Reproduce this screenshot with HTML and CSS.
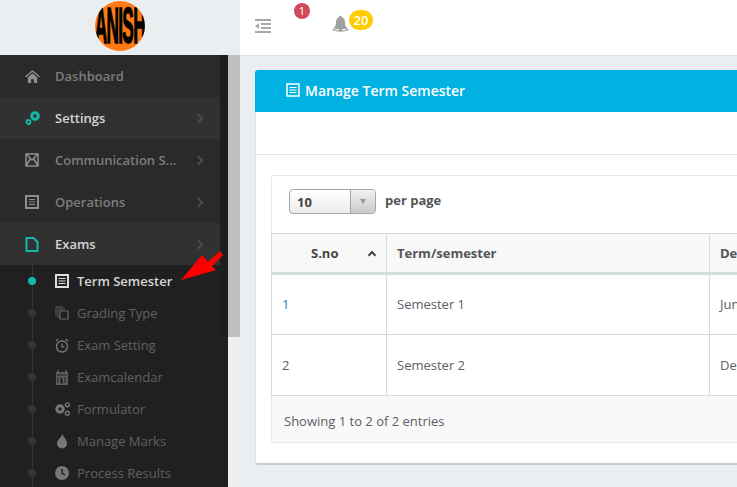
FILE: index.html
```html
<!DOCTYPE html>
<html lang="en">
<head>
    <meta charset="UTF-8">
    <meta name="viewport" content="width=device-width, initial-scale=1.0">
    <title>Manage Term Semester</title>
    <link rel="stylesheet" href="styles.css">
</head>
<body>

    <!-- Top bar -->
    <div class="topbar">
        <div class="brand">
            <div class="logo"><span class="logo-text">ANISH</span></div>
        </div>
        <div class="toolbar">
            <svg class="toggle-icon" width="16" height="16" viewBox="0 0 16 16">
                <path d="M0 1h16v2H0zM6 5h10v2H6zM6 9h10v2H6zM0 13h16v2H0zM4 5v6L0 8z" fill="#a8a8a8"/>
            </svg>
            <span class="badge badge-red">1</span>
            <svg class="bell-icon" width="17" height="18" viewBox="0 0 17 18">
                <path d="M8.500 1c1 0 1.500.6 1.500 1.300C12.300 3 13 5 13 7.500c0 3 1 4.500 2.500 5.500h-14C3 12 4 10.500 4 7.500 4 5 4.700 3 7 2.300 7 1.600 7.500 1 8.500 1z" fill="#a0a0a0"/>
                <path d="M1 14.500c2-1.500 13-1.500 15 0-1 2-14 2-15 0z" fill="none" stroke="#a0a0a0" stroke-width="1.200"/>
                <circle cx="8.500" cy="15" r="1.800" fill="#a0a0a0"/>
            </svg>
            <span class="badge badge-yellow">20</span>
        </div>
    </div>

    <div class="layout">

        <!-- Sidebar -->
        <div class="sidebar">
            <div class="nav">
                <div class="nav-item">
                    <svg class="nav-icon" width="15" height="13" viewBox="0 0 16 14"><path d="M8 0l8 7-1 1-7-6-7 6-1-1zM3 8l5-4.500L13 8v6H9.500v-4h-3v4H3z" fill="#8f8f8f"/></svg>
                    <span>Dashboard</span>
                </div>
                <div class="nav-item nav-light nav-on">
                    <svg class="nav-icon" width="16" height="16" viewBox="0 0 16 16"><circle cx="10" cy="6" r="3.300" fill="none" stroke="#14b8a6" stroke-width="3"/><circle cx="3.500" cy="12" r="2" fill="none" stroke="#14b8a6" stroke-width="1.800"/></svg>
                    <span>Settings</span>
                    <i class="chevron"></i>
                </div>
                <div class="nav-item">
                    <svg class="nav-icon" width="14" height="14" viewBox="0 0 14 14"><path d="M1 1h12v12H1zM1 1l6 6 6-6M1 13l4.500-7.500M13 13L8.500 5.500" fill="none" stroke="#8f8f8f" stroke-width="1.500"/></svg>
                    <span>Communication S...</span>
                    <i class="chevron"></i>
                </div>
                <div class="nav-item">
                    <svg class="nav-icon" width="14" height="14" viewBox="0 0 14 14"><path d="M1 1h12v12H1z" fill="none" stroke="#8f8f8f" stroke-width="2"/><path d="M4 4.500h6M4 7h6M4 9.500h6" stroke="#8f8f8f"/></svg>
                    <span>Operations</span>
                    <i class="chevron"></i>
                </div>
                <div class="nav-item nav-light nav-on">
                    <svg class="nav-icon" width="14" height="15" viewBox="0 0 14 15"><path d="M1.500 1h7l4 4v9h-11z" fill="none" stroke="#14b8a6" stroke-width="2"/></svg>
                    <span>Exams</span>
                    <i class="chevron"></i>
                </div>

                <div class="subnav">
                    <div class="sub-item sub-on">
                        <svg class="sub-icon" width="14" height="14" viewBox="0 0 14 14"><path d="M1 1h12v12H1z" fill="#222" stroke="#ddd" stroke-width="2"/><path d="M3.500 4.500h7M3.500 7h7M3.500 9.500h7" stroke="#ddd"/></svg>
                        <span>Term Semester</span>
                    </div>
                    <div class="sub-item">
                        <svg class="sub-icon" width="14" height="14" viewBox="0 0 14 14"><path d="M1 10V1h7M3 12V3h7" fill="none" stroke="#5c5c5c"/><path d="M5 5h8v8H5z" fill="none" stroke="#6a6a6a" stroke-width="1.200"/></svg>
                        <span>Grading Type</span>
                    </div>
                    <div class="sub-item">
                        <svg class="sub-icon" width="14" height="15" viewBox="0 0 14 15"><circle cx="7" cy="8.500" r="5.500" fill="none" stroke="#777" stroke-width="1.400"/><path d="M7 5.500v3.300h2.500M.8 3l2.500-2M13.200 3l-2.500-2" fill="none" stroke="#777" stroke-width="1.300"/></svg>
                        <span>Exam Setting</span>
                    </div>
                    <div class="sub-item">
                        <svg class="sub-icon" width="14" height="15" viewBox="0 0 14 15"><path d="M1 2h12v13H1z" fill="#5c5c5c"/><path d="M3 0v3M11 0v3" stroke="#5c5c5c" stroke-width="1.500"/><path d="M2 5h10M3 7v6M6 7v6h2M6 10h2M10 7v6" stroke="#222"/></svg>
                        <span>Examcalendar</span>
                    </div>
                    <div class="sub-item">
                        <svg class="sub-icon" width="15" height="14" viewBox="0 0 15 14"><circle cx="5" cy="7" r="3.200" fill="none" stroke="#777" stroke-width="3"/><circle cx="12.300" cy="2.800" r="1.900" fill="none" stroke="#777" stroke-width="1.400"/><circle cx="12.300" cy="11.200" r="1.900" fill="none" stroke="#777" stroke-width="1.400"/></svg>
                        <span>Formulator</span>
                    </div>
                    <div class="sub-item">
                        <svg class="sub-icon" width="14" height="15" viewBox="0 0 14 15"><path d="M7.500 0c1 3.500 4.500 5.500 4.500 9.500a5 5 0 0 1-10 0C2 5.500 6.500 3.500 7.500 0z" fill="#777"/></svg>
                        <span>Manage Marks</span>
                    </div>
                    <div class="sub-item">
                        <svg class="sub-icon" width="14" height="14" viewBox="0 0 14 14"><circle cx="7" cy="7" r="7" fill="#777"/><path d="M7 3v4.300l3 1.500" fill="none" stroke="#222" stroke-width="1.500"/></svg>
                        <span>Process Results</span>
                    </div>
                </div>
            </div>
            <div class="nav-track"></div>
            <div class="page-scroll">
                <div class="page-thumb"></div>
            </div>
        </div>

        <!-- Content -->
        <div class="content">
            <div class="panel">
                <div class="panel-heading">
                    <svg width="14" height="14" viewBox="0 0 14 14"><path d="M1 1h12v12H1z" fill="none" stroke="#fff" stroke-width="1.500"/><path d="M3.500 4.500h7M3.500 7h7M3.500 9.500h7" stroke="#fff"/></svg>
                    <span>Manage Term Semester</span>
                </div>
                <div class="panel-strip"></div>
                <div class="panel-body">
                    <div class="card">
                        <div class="length-row">
                            <div class="select">
                                <span class="select-value">10</span>
                                <span class="select-arrow"><i></i></span>
                            </div>
                            <span class="per-page">per page</span>
                        </div>
                        <table class="data-table">
                            <thead>
                                <tr>
                                    <th class="col-sno"><span class="sno-title">S.no</span><i class="sort-up"></i></th>
                                    <th class="col-term">Term/semester</th>
                                    <th>Description</th>
                                </tr>
                            </thead>
                            <tbody>
                                <tr>
                                    <td class="link">1</td>
                                    <td>Semester 1</td>
                                    <td>June</td>
                                </tr>
                                <tr>
                                    <td>2</td>
                                    <td>Semester 2</td>
                                    <td>December</td>
                                </tr>
                            </tbody>
                        </table>
                        <div class="table-foot">Showing 1 to 2 of 2 entries</div>
                    </div>
                </div>
            </div>
        </div>
    </div>

    <!-- Red annotation arrow -->
    <svg class="annotation" width="46" height="34" viewBox="0 0 46 34">
        <path d="M3 32L24 7l6 7 12-11 3 4-11 11 4 4z" fill="#f00"/>
    </svg>

</body>
</html>
```

FILE: styles.css
```css
/* Basic reset */
* {
    margin: 0;
    padding: 0;
    box-sizing: border-box;
}

html, body {
    height: 100%;
    overflow: hidden;
}

body {
    position: relative;
    font-family: "Open Sans", Arial, sans-serif;
    font-size: 13px;
    color: #555;
    background-color: #ebeef0;
}

/* Top bar */
.topbar {
    display: flex;
    height: 55px;
}

.brand {
    width: 240px;
    padding-top: 1px;
    background-color: #ebeef0;
}

.logo {
    display: flex;
    justify-content: center;
    align-items: center;
    width: 50px;
    height: 50px;
    margin-left: 95px;
    border-radius: 50%;
    background-color: #ff7a12;
    overflow: hidden;
}

.logo-text {
    font-family: "Liberation Sans", Arial, sans-serif;
    font-size: 24px;
    font-weight: bold;
    letter-spacing: -1px;
    color: #000;
    -webkit-text-stroke: .7px #000;
    transform: scale(.72, 2.1);
}

.toolbar {
    position: relative;
    flex: 1;
    height: 56px;
    background-color: #fff;
    border-bottom: 1px solid #e2e5e7;
}

.toggle-icon {
    position: absolute;
    left: 15px;
    top: 18px;
}

.bell-icon {
    position: absolute;
    left: 92px;
    top: 15px;
}

.badge {
    position: absolute;
    border-radius: 10px;
    color: #fff;
    text-align: center;
}

.badge-red {
    left: 54px;
    top: 3px;
    width: 16px;
    height: 16px;
    font-size: 11px;
    line-height: 16px;
    background-color: #d2495b;
}

.badge-yellow {
    left: 109px;
    top: 10px;
    width: 24px;
    height: 20px;
    font-size: 13px;
    font-weight: 600;
    line-height: 20px;
    background-color: #ffcc00;
}

.layout {
    display: flex;
    height: calc(100% - 55px);
}

/* Sidebar */
.sidebar {
    display: flex;
    width: 240px;
    flex-shrink: 0;
}

.nav {
    width: 220px;
    background-color: #202020;
}

.nav-item {
    position: relative;
    display: flex;
    align-items: center;
    height: 42px;
    padding-left: 25px;
    font-size: 13px;
    font-weight: 600;
    color: #7d7d7d;
    background-color: #2a2a2a;
}

.nav-item span {
    position: absolute;
    left: 55px;
}

.nav-light {
    background-color: #313131;
}

.nav-on {
    color: #d6d6d6;
}

.chevron {
    position: absolute;
    right: 18px;
    top: 18px;
    width: 7px;
    height: 7px;
    border-top: 2px solid #4c4c4c;
    border-right: 2px solid #4c4c4c;
    transform: rotate(45deg);
}

.subnav {
    position: relative;
    background-color: #202020;
}

/* line running through the dots */
.subnav::before {
    content: "";
    position: absolute;
    left: 32px;
    top: 0;
    bottom: 0;
    width: 1px;
    background-color: #333;
}

.sub-item {
    position: relative;
    display: flex;
    align-items: center;
    height: 32px;
    padding-left: 55px;
    font-size: 13px;
    color: #616161;
}

.sub-item::before {
    content: "";
    position: absolute;
    left: 28px;
    top: 12px;
    width: 8px;
    height: 8px;
    border-radius: 50%;
    background-color: #333;
}

.sub-item span {
    position: absolute;
    left: 77px;
}

.sub-on {
    font-weight: 600;
    color: #d6d6d6;
}

.sub-on::before {
    background-color: #14b8a6;
}

.nav-track {
    width: 8px;
    background: linear-gradient(#1e1e1e 282px, #202020 282px);
}

.page-scroll {
    width: 12px;
    background-color: #eef0f0;
}

.page-thumb {
    height: 282px;
    background-color: #bfbfbf;
}

/* Content */
.content {
    flex: 1;
    min-width: 0;
    padding: 15px 0 0 15px;
    overflow: hidden;
}

.panel {
    width: 700px;
    height: 395px;
    background-color: #fff;
    border-bottom: 2px solid #c5ccd0;
    border-left: 1px solid #dfe3e5;
    border-radius: 3px 0 0 3px;
}

.panel-heading {
    display: flex;
    align-items: center;
    gap: 5px;
    height: 42px;
    margin-left: -1px;
    padding: 0 0 2px 31px;
    font-size: 14px;
    font-weight: 600;
    color: #fff;
    background-color: #00b1e1;
    border-radius: 3px 0 0 0;
}

.panel-strip {
    height: 43px;
    border-bottom: 1px solid #e2e5e7;
}

.panel-body {
    padding: 20px 0 0 15px;
}

.card {
    height: 268px;
    border: 1px solid #e4e7e8;
    border-right: 0;
    border-radius: 3px 0 0 3px;
}

.length-row {
    display: flex;
    align-items: flex-start;
    height: 57px;
    padding: 13px 0 0 17px;
}

.select {
    display: flex;
    width: 87px;
    height: 25px;
    border: 1px solid #a6a6a6;
    border-radius: 4px;
    background: linear-gradient(#fff, #ececec);
}

.select-value {
    flex: 1;
    padding-left: 7px;
    font-size: 13px;
    font-weight: 700;
    line-height: 24px;
    color: #444;
}

.select-arrow {
    display: flex;
    justify-content: center;
    align-items: center;
    width: 25px;
    border-left: 1px solid #a6a6a6;
    background: linear-gradient(#f2f2f2, #c9c9c9);
    border-radius: 0 3px 3px 0;
}

.select-arrow i {
    border-top: 5px solid #999;
    border-left: 3px solid transparent;
    border-right: 3px solid transparent;
}

.per-page {
    margin-left: 9px;
    font-size: 13px;
    font-weight: 700;
    line-height: 22px;
    color: #555;
}

/* Table */
.data-table {
    width: 700px;
    margin-left: -1px;
    table-layout: fixed;
    border-collapse: collapse;
}

.data-table th {
    position: relative;
    height: 40px;
    padding: 0 10px;
    font-size: 13px;
    font-weight: 700;
    text-align: left;
    background-color: #f8f8f8;
    border: 1px solid #d5dcde;
    border-bottom: 3px solid #d5dcde;
}

.data-table td {
    height: 61px;
    padding: 0 10px;
    font-size: 13px;
    color: #5a6066;
    border: 1px solid #d5dcde;
}

.data-table tbody tr:first-child td {
    padding-bottom: 2px;
}

.col-sno {
    width: 115px;
}

.col-term {
    width: 323px;
}

.data-table td.link {
    color: #3b7ea8;
}

.sno-title {
    margin-left: 29px;
    color: #444;
}

.sort-up {
    position: absolute;
    right: 11px;
    top: 18px;
    width: 6px;
    height: 6px;
    border-top: 2px solid #444;
    border-left: 2px solid #444;
    transform: rotate(45deg);
}

.table-foot {
    height: 46px;
    padding-left: 12px;
    font-size: 13px;
    line-height: 50px;
    color: #5a6066;
    background-color: #f9f9f9;
}

/* Annotation */
.annotation {
    position: absolute;
    left: 178px;
    top: 248px;
}
```
